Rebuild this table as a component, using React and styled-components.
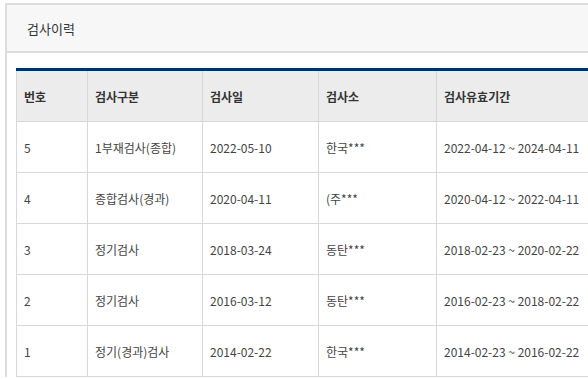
import React from "react";
import styled, { createGlobalStyle } from "styled-components";

const Global = createGlobalStyle`
  html, body { margin: 0; padding: 0; background: #fff; overflow: hidden; }
  body { font-family: "Noto Sans CJK KR", "Noto Sans", sans-serif; }
`;

const Page = styled.div`
  padding: 3px 0 0 5px;
  width: 620px;
`;

const Box = styled.section`
  border: 2px solid #dddddd;
  border-right: none;
  border-bottom: none;
  background: #fff;
`;

const BoxHeader = styled.header`
  height: 46px;
  background: #f7f7f7;
  border-bottom: 2px solid #dddddd;
  display: flex;
  align-items: center;
  padding-left: 20px;
  font-size: 13px;
  color: #333;
`;

const Body = styled.div`
  padding: 15px 0 0 9px;
`;

const Table = styled.table`
  border-collapse: collapse;
  border-top: 3px solid #003366;
  table-layout: fixed;
  width: 600px;
  font-size: 12px;
`;

const Th = styled.th`
  box-sizing: border-box;
  height: 52px;
  background: #ececec;
  border: 1px solid #d8d8d8;
  border-top: none;
  text-align: left;
  padding: 0 0 0 7px;
  font-weight: 700;
  color: #333;
  width: ${(p) => p.$w}px;
`;

const Td = styled.td`
  height: 50px;
  border: 1px solid #d8d8d8;
  padding: 0 0 0 7px;
  color: #444;
  white-space: nowrap;
`;

const rows = [
  ["5", "1부재검사(종합)", "2022-05-10", "한국***", "2022-04-12 ~ 2024-04-11"],
  ["4", "종합검사(경과)", "2020-04-11", "(주***", "2020-04-12 ~ 2022-04-11"],
  ["3", "정기검사", "2018-03-24", "동탄***", "2018-02-23 ~ 2020-02-22"],
  ["2", "정기검사", "2016-03-12", "동탄***", "2016-02-23 ~ 2018-02-22"],
  ["1", "정기(경과)검사", "2014-02-22", "한국***", "2014-02-23 ~ 2016-02-22"],
];

const heads = [
  ["번호", 71],
  ["검사구분", 115],
  ["검사일", 116],
  ["검사소", 118],
  ["검사유효기간", 180],
];

export default function App() {
  return (
    <>
      <Global />
      <Page>
        <Box>
          <BoxHeader>검사이력</BoxHeader>
          <Body>
            <Table>
              <thead>
                <tr>
                  {heads.map(([h, w]) => (
                    <Th key={h} $w={w}>{h}</Th>
                  ))}
                </tr>
              </thead>
              <tbody>
                {rows.map((r) => (
                  <tr key={r[0]}>
                    {r.map((c, i) => (
                      <Td key={i}>{c}</Td>
                    ))}
                  </tr>
                ))}
              </tbody>
            </Table>
          </Body>
        </Box>
      </Page>
    </>
  );
}
